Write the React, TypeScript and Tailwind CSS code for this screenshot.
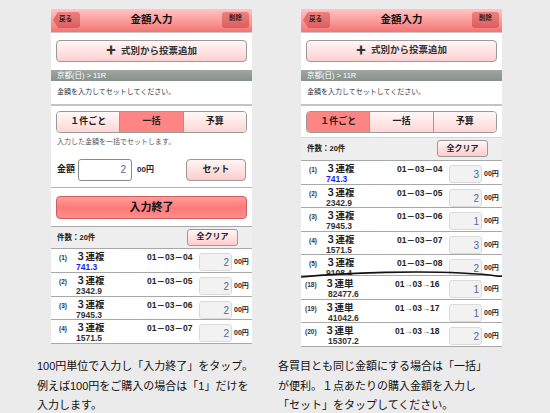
import React from "react";

const FONT = { fontFamily: '"Liberation Sans", "Noto Sans CJK JP", sans-serif' };

type RowProps = {
  no: string;
  kind: string;
  odds: string;
  combo: React.ReactNode;
  val: string;
  blue?: boolean;
  wide?: boolean;
  cut?: boolean;
};

const Header: React.FC = () => (
  <div className="relative h-[24px] bg-gradient-to-b from-[#ffc4c4] to-[#f27474] border-b border-[#c9c9c9] flex items-center justify-center">
    <div className="absolute left-[2px] top-[3px] h-[16px] w-[27px] flex items-center">
      <div className="w-0 h-0 border-y-[8px] border-y-transparent border-r-[5px] border-r-[#e26a6a]" />
      <div className="h-[16px] flex-1 bg-gradient-to-b from-[#ec8080] to-[#dc5c5c] rounded-r-[3px] flex items-center text-[6.5px] font-bold text-[#3a1a1a] pl-[1px] pb-[3px]">
        戻る
      </div>
    </div>
    <div className="text-[10.5px] font-bold text-[#111]">金額入力</div>
    <div className="absolute right-[3px] top-[3px] h-[16px] w-[27px] rounded-[3px] bg-gradient-to-b from-[#ec8080] to-[#dc5c5c] flex justify-center text-[6.5px] font-bold text-[#3a1a1a] pt-[1px]">
      削除
    </div>
  </div>
);

const TopPart: React.FC = () => (
  <>
    <Header />
    <div className="px-[5px] pt-[7px]">
      <div className="h-[22px] rounded-[4px] border border-[#9a9a9a] bg-gradient-to-b from-[#fff6f6] to-[#ffd0d0] flex items-center justify-center gap-[5px] text-[9.5px] font-bold text-[#333]">
        <span className="text-[10px] leading-none">✚</span>
        <span>式別から投票追加</span>
      </div>
    </div>
    <div className="mt-[8px] h-[11px] bg-gradient-to-b from-[#a0a7a3] to-[#88908c] text-white text-[7.5px] leading-[11px] pl-[6px]">
      京都(日) &gt; 11R
    </div>
    <div className="h-[24px] flex items-center pl-[6px] text-[7px] text-[#333]">
      金額を入力してセットしてください。
    </div>
    <div className="h-[2px] bg-[#c4c4c4]" />
  </>
);

const Tabs: React.FC<{ sel: number }> = ({ sel }) => {
  const labels = ["１件ごと", "一括", "予算"];
  return (
    <div className="mx-[5px] mt-[5px] h-[22px] rounded-[4px] border border-[#9a9a9a] flex overflow-hidden">
      {labels.map((l, i) => (
        <div
          key={l}
          className={
            "flex-1 flex items-center justify-center text-[9px] font-bold text-[#222] " +
            (i > 0 ? "border-l border-[#9a9a9a] " : "") +
            (i === sel ? "bg-[#ff8585]" : "bg-gradient-to-b from-[#fff8f8] to-[#ffd6d6]")
          }
        >
          {l}
        </div>
      ))}
    </div>
  );
};

const CountBar: React.FC<{ h: string }> = ({ h }) => (
  <div className={"bg-[#eeeeee] border-b border-[#a8a8a8] flex items-center justify-between pl-[6px] pr-[14px] " + h}>
    <div className="text-[7.5px] font-bold text-[#222]">件数：20件</div>
    <div className="w-[51px] h-[17px] rounded-[3px] border border-[#9a9a9a] bg-gradient-to-b from-[#fff6f6] to-[#ffcccc] flex items-center justify-center text-[8px] font-bold text-[#222]">
      全クリア
    </div>
  </div>
);

const Row: React.FC<RowProps> = ({ no, kind, odds, combo, val, blue, wide, cut }) => (
  <div className={"flex items-start border-b border-[#a8a8a8] overflow-hidden " + (cut ? "h-[21px]" : "h-[24px]")}>
    <div className={"text-[6.5px] font-bold text-[#333] pt-[4px] " + (wide ? "pl-[4px] w-[24px]" : "pl-[8px] w-[25px]")}>{no}</div>
    <div className={"flex flex-col " + (wide ? "w-[70px]" : "w-[71px]")}>
      <div className="text-[9.5px] font-bold text-[#222] leading-[11px] pt-[2px]">{kind}</div>
      <div className={"text-[8.5px] font-bold leading-[10px] " + (wide ? "pl-[3px] " : "pl-0 ") + (blue ? "text-[#1a1aff]" : "text-[#333]")}>{odds}</div>
    </div>
    <div className={"text-[8.5px] font-bold text-[#222] pt-[2px] " + (wide ? "w-[54px]" : "w-[52px]")}>{combo}</div>
    <div className="mt-[4px] w-[33px] h-[18px] rounded-[3px] border border-[#dadada] bg-[#f2f2f2] flex items-end justify-end pr-[2px] text-[10px] text-[#4c6c9c] leading-[14px]">
      {val}
    </div>
    <div className="ml-[2px] mt-[8px] text-[7px] font-bold text-[#222]">00円</div>
  </div>
);

const Arrow = () => <span className="text-[8px] font-normal">→</span>;

const combo3 = (a: string) => `01－03－${a}`;
const comboT = (a: string) => (
  <>
    01<Arrow />03<Arrow />{a}
  </>
);

const LeftPhone: React.FC = () => (
  <div className="w-[201px] h-[335px] bg-white overflow-hidden flex flex-col">
    <TopPart />
    <Tabs sel={1} />
    <div className="h-[18px] flex items-center pl-[6px] text-[7px] text-[#555]">
      入力した金額を一括でセットします。
    </div>
    <div className="mt-[8px] h-[22px] flex items-center px-[6px]">
      <div className="text-[9px] font-bold text-[#222] w-[21px]">金額</div>
      <div className="w-[54px] h-[22px] rounded-[3px] border border-[#8a8a8a] flex items-center justify-end pr-[5px] text-[10px] text-[#4c6c9c]">
        2
      </div>
      <div className="ml-[5px] text-[8px] font-bold text-[#222]">00円</div>
      <div className="ml-auto w-[60px] h-[22px] rounded-[4px] border border-[#9a9a9a] bg-gradient-to-b from-[#fff6f6] to-[#ffcccc] flex items-center justify-center text-[9px] font-bold text-[#222]">
        セット
      </div>
    </div>
    <div className="mt-[6px] h-[1px] bg-[#b4b4b4]" />
    <div className="mx-[5px] mt-[8px] h-[23px] rounded-[4px] border border-[#c86060] bg-gradient-to-b from-[#ff9c9c] via-[#ff7a7a] to-[#ff8c8c] flex items-center justify-center text-[11px] font-bold text-[#111]">
      入力終了
    </div>
    <div className="mt-[7px] border-t border-[#a8a8a8]" />
    <CountBar h="h-[23px]" />
    <Row no="(1)" kind="３連複" odds="741.3" combo={combo3("04")} val="2" blue />
    <Row no="(2)" kind="３連複" odds="2342.9" combo={combo3("05")} val="2" />
    <Row no="(3)" kind="３連複" odds="7945.3" combo={combo3("06")} val="2" />
    <Row no="(4)" kind="３連複" odds="1571.5" combo={combo3("07")} val="2" />
  </div>
);

const RightPhone: React.FC = () => (
  <div className="w-[201px] h-[338px] bg-white overflow-hidden flex flex-col">
    <TopPart />
    <Tabs sel={0} />
    <div className="mt-[4px] border-t border-[#d6d6d6]" />
    <CountBar h="h-[24px]" />
    <Row no="(1)" kind="３連複" odds="741.3" combo={combo3("04")} val="3" blue />
    <Row no="(2)" kind="３連複" odds="2342.9" combo={combo3("05")} val="2" />
    <Row no="(3)" kind="３連複" odds="7945.3" combo={combo3("06")} val="1" />
    <Row no="(4)" kind="３連複" odds="1571.5" combo={combo3("07")} val="3" />
    <div className="relative">
      <Row no="(5)" kind="３連複" odds="9108.4" combo={combo3("08")} val="2" cut />
      <svg className="absolute left-0 bottom-[-3px]" width="201" height="8" viewBox="0 0 201 8">
        <path d="M0 6 C 50 1, 120 0, 160 2 S 195 6, 201 5" fill="none" stroke="#111" strokeWidth="1.6" />
      </svg>
    </div>
    <Row no="(18)" kind="３連単" odds="82477.6" combo={comboT("16")} val="1" wide />
    <Row no="(19)" kind="３連単" odds="41042.6" combo={comboT("17")} val="1" wide />
    <Row no="(20)" kind="３連単" odds="15307.2" combo={comboT("18")} val="2" wide />
  </div>
);

export default function App() {
  return (
    <div className="w-[550px] h-[413px] bg-[#ebebeb] overflow-hidden" style={FONT}>
      <div className="flex pt-[9px] pl-[51px] gap-[49px] items-start">
        <LeftPhone />
        <RightPhone />
      </div>
      <div className="flex pl-[37px] pt-[10px] text-[11px] leading-[19.5px] text-[#111] whitespace-nowrap">
        <div className="w-[241px]">
          100円単位で入力し「入力終了」をタップ。
          <br />
          例えば100円をご購入の場合は「1」だけを
          <br />
          入力します。
        </div>
        <div>
          各買目とも同じ金額にする場合は「一括」
          <br />
          が便利。１点あたりの購入金額を入力し
          <br />
          「セット」をタップしてください。
        </div>
      </div>
    </div>
  );
}
